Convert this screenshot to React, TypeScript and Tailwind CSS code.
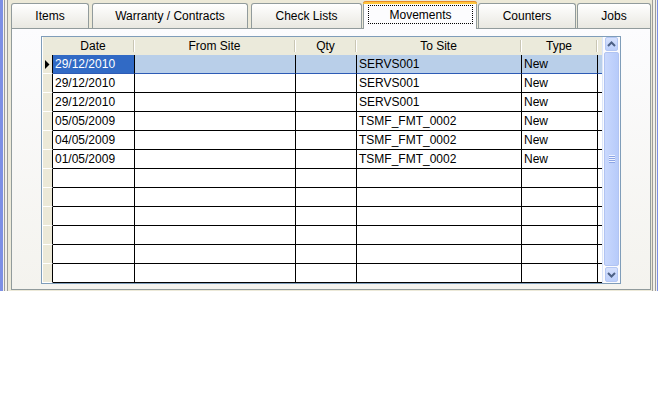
import React from "react";

// XP-style "Movements" tab of an asset record, with a data grid.

type Tab = { label: string; cls: string; selected?: boolean };

const TABS: Tab[] = [
  { label: "Items", cls: "w-[78px] mr-[3px]" },
  { label: "Warranty / Contracts", cls: "w-[156px] mr-[3px]" },
  { label: "Check Lists", cls: "w-[111px] mr-px" },
  { label: "Movements", cls: "w-[114px] mr-px", selected: true },
  { label: "Counters", cls: "w-[98px] mr-px" },
  { label: "Jobs", cls: "w-[74px]" },
];

const COLS = [
  { label: "Date", cls: "w-[82px]" },
  { label: "From Site", cls: "w-[161px]" },
  { label: "Qty", cls: "w-[61px]" },
  { label: "To Site", cls: "w-[165px]" },
  { label: "Type", cls: "w-[76px]" },
];

const ROWS: string[][] = [
  ["29/12/2010", "", "", "SERVS001", "New"],
  ["29/12/2010", "", "", "SERVS001", "New"],
  ["29/12/2010", "", "", "SERVS001", "New"],
  ["05/05/2009", "", "", "TSMF_FMT_0002", "New"],
  ["04/05/2009", "", "", "TSMF_FMT_0002", "New"],
  ["01/05/2009", "", "", "TSMF_FMT_0002", "New"],
  ["", "", "", "", ""],
  ["", "", "", "", ""],
  ["", "", "", "", ""],
  ["", "", "", "", ""],
  ["", "", "", "", ""],
  ["", "", "", "", ""],
];

function TabButton({ tab }: { tab: Tab }) {
  if (tab.selected) {
    return (
      <div className={`${tab.cls} relative z-10 -mb-px flex h-[28px] flex-col rounded-t-[3px] border-x border-[#919b9c] bg-[#fcfcfe]`}>
        <div className="-mx-px h-[3px] rounded-t-[3px] border-t border-[#e68b2c] bg-[#ffc73c]" />
        <div className="mt-px ml-[4px] mr-[3px] flex h-[19px] items-center justify-center border border-dotted border-black">
          {tab.label}
        </div>
      </div>
    );
  }
  return (
    <div
      className={`${tab.cls} flex h-[25px] items-center justify-center rounded-t-[3px] border border-b-0 border-[#919b9c] bg-linear-to-b from-white to-[#e9e8e1]`}
    >
      {tab.label}
    </div>
  );
}

function Chevron({ up }: { up?: boolean }) {
  return (
    <svg width="9" height="6" viewBox="0 0 9 6">
      <polyline
        points={up ? "1,5 4.5,1.5 8,5" : "1,1 4.5,4.5 8,1"}
        fill="none"
        stroke="#4d6185"
        strokeWidth="2"
      />
    </svg>
  );
}

function ScrollBar() {
  return (
    <div className="flex w-[18px] flex-col gap-px border-l border-[#dce6fa] bg-[#fbfbfd] px-px py-0">
      <div className="mx-px flex h-[14px] items-center justify-center rounded-[2px] border border-[#b4c7f3] bg-linear-to-b from-[#d6e1fd] to-[#bccffb]">
        <Chevron up />
      </div>
      <div className="flex flex-1 items-center justify-center rounded-[2px] border border-[#b1c4f2] bg-linear-to-r from-[#c9d8fd] to-[#b7cbfa]">
        <svg width="6" height="8" viewBox="0 0 6 8">
          <line x1="0" y1="0.5" x2="6" y2="0.5" stroke="#eef3ff" />
          <line x1="0" y1="1.5" x2="6" y2="1.5" stroke="#8ca5e6" />
          <line x1="0" y1="2.5" x2="6" y2="2.5" stroke="#eef3ff" />
          <line x1="0" y1="3.5" x2="6" y2="3.5" stroke="#8ca5e6" />
          <line x1="0" y1="4.5" x2="6" y2="4.5" stroke="#eef3ff" />
          <line x1="0" y1="5.5" x2="6" y2="5.5" stroke="#8ca5e6" />
          <line x1="0" y1="6.5" x2="6" y2="6.5" stroke="#eef3ff" />
          <line x1="0" y1="7.5" x2="6" y2="7.5" stroke="#8ca5e6" />
        </svg>
      </div>
      <div className="mx-px mb-[1px] flex h-[15px] items-center justify-center rounded-[2px] border border-[#b4c7f3] bg-linear-to-b from-[#d6e1fd] to-[#bccffb]">
        <Chevron />
      </div>
    </div>
  );
}

function Grid() {
  return (
    <div className="flex h-[248px] w-[580px] border border-[#7f9db9] bg-white">
      <div className="flex w-[560px] flex-col">
        {/* header */}
        <div className="flex h-[18px] bg-[#ebeadb]">
          <div className="w-[11px] border-l border-white" />
          {COLS.map((c) => (
            <div key={c.label} className={`${c.cls} flex items-center`}>
              <div className="flex-1 text-center">{c.label}</div>
              <div className="h-[12px] w-[2px] border-l border-[#c9c6b4] border-r border-r-white" />
            </div>
          ))}
          <div className="w-[4px]" />
        </div>
        {ROWS.map((r, i) => {
          const sel = i === 0;
          return (
            <div
              key={i}
              className={`flex h-[19px] ${sel ? "bg-[#b9cfe9]" : ""}`}
            >
              <div className="flex w-[11px] items-center justify-center border-b border-l border-r border-b-white border-l-white border-r-black bg-[#ece9d8]">
                {sel && (
                  <svg width="5" height="9" viewBox="0 0 5 9">
                    <path d="M0 0 L4.5 4.5 L0 9 Z" fill="#000" />
                  </svg>
                )}
              </div>
              {COLS.map((c, j) => (
                <div
                  key={c.label}
                  className={`${c.cls} flex items-center overflow-hidden whitespace-nowrap border-r border-b border-r-black pl-[2px] ${
                    sel ? "border-b-[#2d5bb5]" : "border-b-black"
                  } ${sel && j === 0 ? "bg-[#316ac5] text-white" : ""}`}
                >
                  {r[j]}
                </div>
              ))}
              <div className={`w-[4px] border-b ${sel ? "border-b-[#2d5bb5]" : "border-b-black"}`} />
            </div>
          );
        })}
      </div>
      <ScrollBar />
    </div>
  );
}

export default function App() {
  return (
    <div className="h-[400px] w-[664px] bg-white font-['Liberation_Sans',Arial,sans-serif] text-[12px] leading-none text-black">
      <div className="flex h-[291px]">
        <div className="w-[3px] bg-[#7d8fe4]" />
        <div className="w-px bg-[#f4f3ee]" />
        <div className="w-px bg-[#9d9d9a]" />
        <div className="w-[2px] bg-[#f1f0ea]" />
        <div className="w-px bg-[#9d9d9a]" />
        <div className="w-[3px] bg-[#ece9d8]" />
        <div className="flex w-[640px] flex-col bg-[#ece9d8]">
          <div className="flex h-[28px] items-end">
            {TABS.map((t) => (
              <TabButton key={t.label} tab={t} />
            ))}
          </div>
          <div className="h-[262px] border border-[#919b9c] bg-linear-to-b from-[#fcfcfe] to-[#f4f3ee] pl-[29px] pt-[7px]">
            <Grid />
          </div>
        </div>
        <div className="w-px bg-[#ece9d8]" />
        <div className="w-px bg-[#9d9d9a]" />
        <div className="w-[2px] bg-[#f1f0ea]" />
        <div className="w-px bg-[#9d9d9a]" />
        <div className="w-px bg-[#f4f3ee]" />
        <div className="w-px bg-[#7d8fe4]" />
        <div className="flex-1 bg-white" />
      </div>
    </div>
  );
}
